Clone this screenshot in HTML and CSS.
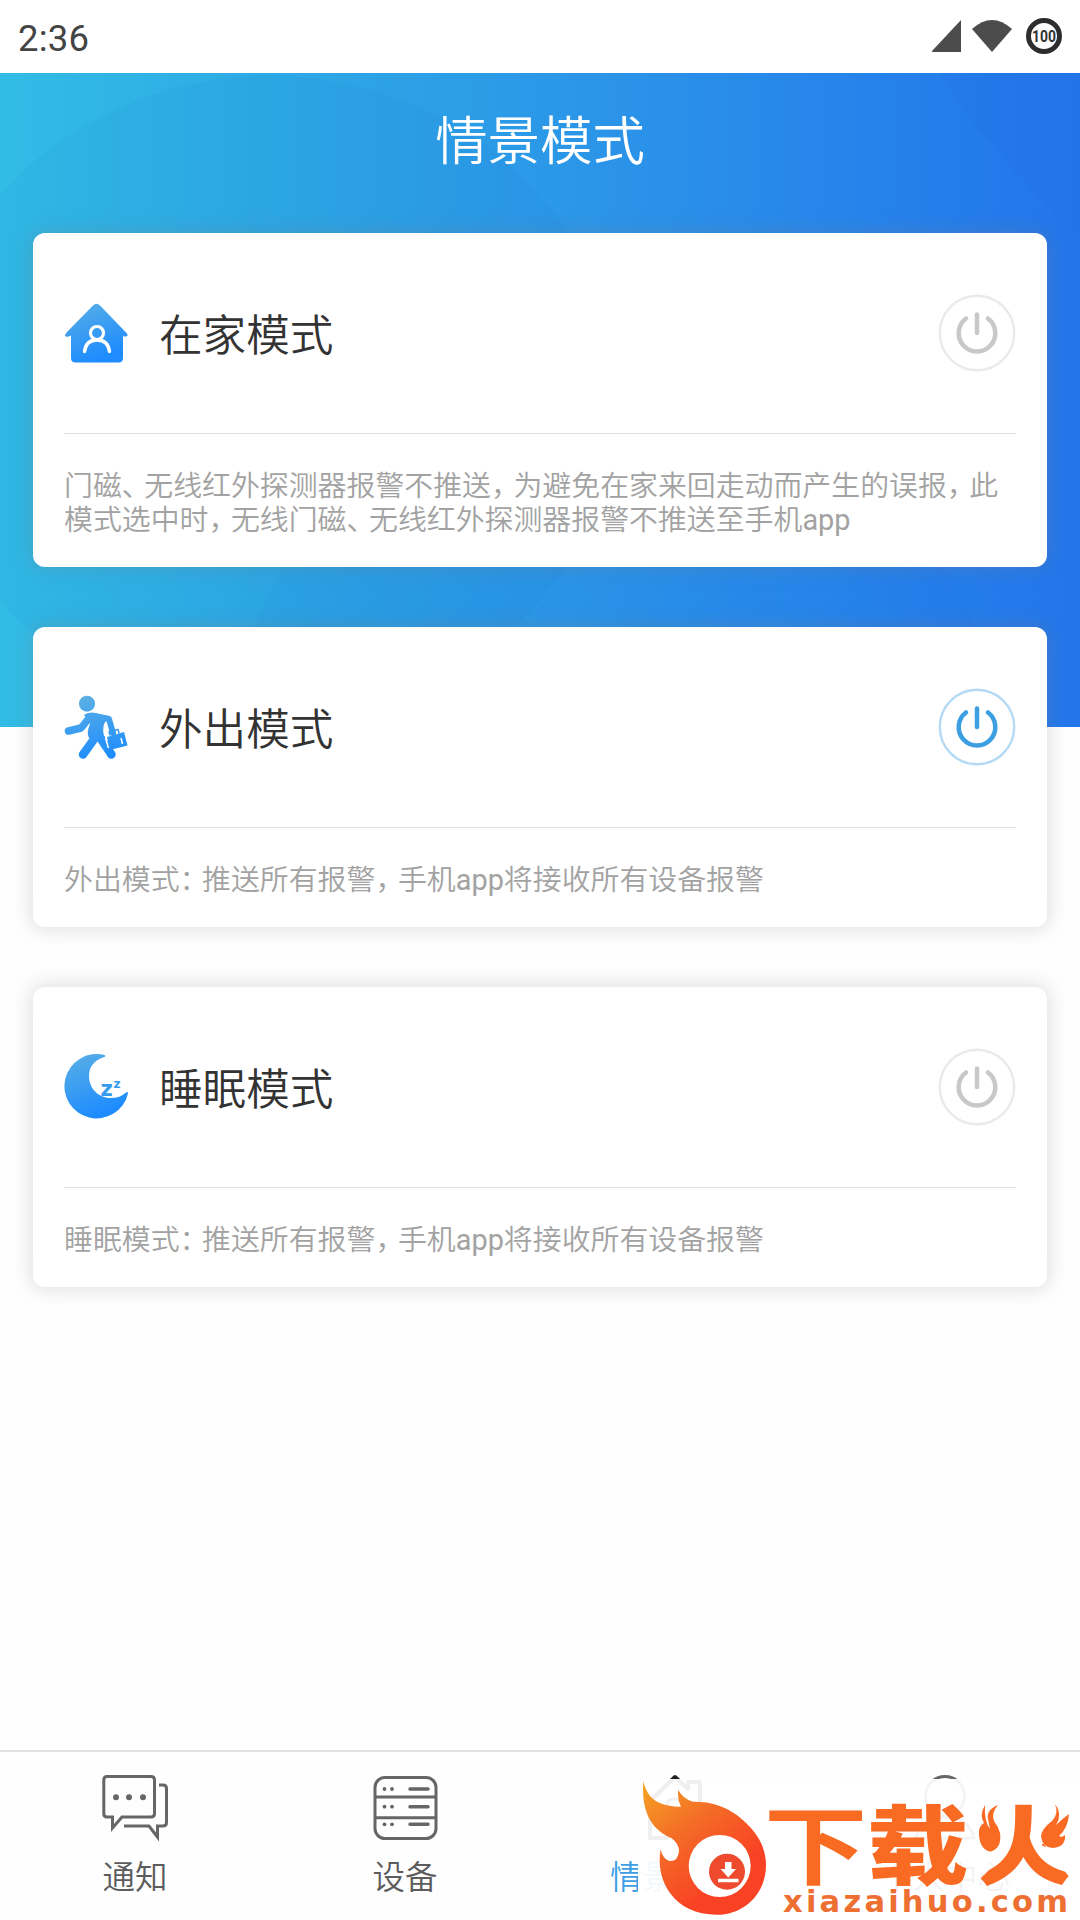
FILE: index.html
```html
<!DOCTYPE html>
<html lang="zh-CN">
<head>
  <meta charset="UTF-8">
  <meta name="viewport" content="width=device-width, initial-scale=1.0">
  <title>情景模式</title>
  <link rel="stylesheet" href="styles.css">
</head>
<body>
  <svg width="0" height="0" class="defs">
    <defs>
      <linearGradient id="blue" x1="0" y1="0" x2="0.4" y2="1">
        <stop offset="0" stop-color="#5bb0e4"/>
        <stop offset="1" stop-color="#1e8cff"/>
      </linearGradient>
      <linearGradient id="manBlue" gradientUnits="userSpaceOnUse" x1="25" y1="0" x2="38" y2="64">
        <stop offset="0" stop-color="#5bb0e4"/>
        <stop offset="1" stop-color="#1e8cff"/>
      </linearGradient>
      <linearGradient id="fire" x1="0" y1="0" x2="0.6" y2="0.8">
        <stop offset="0" stop-color="#f6a21b"/>
        <stop offset="0.5" stop-color="#f4661f"/>
        <stop offset="1" stop-color="#f93a1c"/>
      </linearGradient>
      <clipPath id="trunk">
        <path d="M370 20H402V60L442 112H330L370 72Z"/>
      </clipPath>
      <symbol id="power" viewBox="0 0 78 78">
        <circle class="ring" cx="39" cy="39" r="37.2"/>
        <path class="mark" d="M28 24.5A18.3 18.3 0 1 0 50 24.5M39 20.5V39"/>
      </symbol>
    </defs>
  </svg>

  <div class="status">
    <span class="time">2:36</span>
    <svg width="131" height="40" viewBox="0 0 131 40">
      <path d="M1 35V34L30 3V35Z" fill="#4c4c4c"/>
      <path d="M41 12Q61-6 81 12L61 35Z" fill="#4c4c4c"/>
      <circle cx="113" cy="19" r="15.500" fill="#fff" stroke="#2d2d2d" stroke-width="5"/>
      <text x="113" y="24.500" class="battery" textLength="24" lengthAdjust="spacingAndGlyphs">100</text>
    </svg>
  </div>

  <header class="header">
    <svg class="header-bg" width="1080" height="654" viewBox="0 73 1080 654">
      <ellipse cx="270" cy="398" rx="347" ry="322" fill="#0a62c8" opacity="0.06"/>
      <ellipse cx="615" cy="730" rx="378" ry="340" fill="#1560d8" opacity="0.05"/>
      <path d="M940 73Q985 150 1080 235V73Z" fill="#1048c8" opacity="0.05"/>
    </svg>
    <h1>情景模式</h1>
  </header>

  <main>
    <section class="card">
      <div class="card-head">
        <svg width="64" height="64" viewBox="0 0 64 64">
          <path d="M29 4.500Q32.500 1 36 4.500L63 32.500Q65 36 60 35.500L59 34.500V57Q59 61.500 54.500 61.500H11.500Q7 61.500 7 57V34.500Q2 37 1 34.500Q1 33 3 31Z" fill="url(#blue)"/>
          <circle cx="33" cy="32" r="6.500" fill="none" stroke="#fff" stroke-width="3.200"/>
          <path d="M20.500 50.500Q22 39 33 39Q44 39 45.500 50.500" fill="none" stroke="#fff" stroke-width="3.400" stroke-linecap="round"/>
        </svg>
        <h2>在家模式</h2>
        <svg class="power" width="78" height="78"><use href="#power"/></svg>
      </div>
      <p>门磁<i>、</i>无线红外探测器报警不推送<i>，</i>为避免在家来回走动而产生的误报<i>，</i>此<br>模式选中时<i>，</i>无线门磁<i>、</i>无线红外探测器报警不推送至手机<b>app</b></p>
    </section>

    <section class="card">
      <div class="card-head">
        <svg width="64" height="64" viewBox="0 0 64 64">
          <g fill="none" stroke="url(#manBlue)" stroke-linecap="round" stroke-linejoin="round">
            <path d="M4.500 36L17 33L26 22" stroke-width="7.500"/>
            <path d="M27 21L45 24L49 38" stroke-width="6"/>
            <path d="M33 40L19 59.500" stroke-width="8.500"/>
            <path d="M35 41L47.500 59.500" stroke-width="8.500"/>
            <path d="M46 40L45 37L54 34.500L55 38" stroke-width="1.500"/>
          </g>
          <g fill="url(#manBlue)">
            <circle cx="23" cy="8.700" r="8"/>
            <path d="M20 20Q25 16.500 32 18L45 21L40 29Q38 37 41 43H25Q22 38 26 29Z"/>
            <path d="M43 42L60 37L63.500 50.500L46 55Z"/>
          </g>
          <path d="M57 43L58.500 49M41.500 43L44.500 53" stroke="#fff" stroke-width="1.500"/>
        </svg>
        <h2>外出模式</h2>
        <svg class="power on" width="78" height="78"><use href="#power"/></svg>
      </div>
      <p>外出模式<i>：</i>推送所有报警<i>，</i>手机<b>app</b>将接收所有设备报警</p>
    </section>

    <section class="card">
      <div class="card-head">
        <svg width="64" height="66" viewBox="0 0 64 66">
          <path d="M40.500 1A32.200 32.200 0 1 0 64 39.500Q64 37 62 38.500Q56 44 47 44C34 44 25 34 25 22C25 13 30 6 40.500 3Q42 2 40.500 1Z" fill="url(#blue)"/>
          <text x="36.500" y="42" class="zz" font-size="21">z</text>
          <text x="49.500" y="33.500" class="zz" font-size="12">z</text>
        </svg>
        <h2>睡眠模式</h2>
        <svg class="power" width="78" height="78"><use href="#power"/></svg>
      </div>
      <p>睡眠模式<i>：</i>推送所有报警<i>，</i>手机<b>app</b>将接收所有设备报警</p>
    </section>
  </main>

  <nav class="tabs">
    <a>
      <svg width="72" height="72" viewBox="0 0 72 72">
        <path d="M8 4.500H52Q55.500 4.500 55.500 8V41.500Q55.500 45 52 45H23L13.500 56V45H8Q4.800 45 4.800 41.500V8Q4.800 4.500 8 4.500Z"/>
        <path d="M60 13H64Q67.500 13 67.500 16.500V50.500Q67.500 54 64 54H58.500V65L50 54H25"/>
        <g class="dot"><circle cx="17" cy="25.300" r="3"/><circle cx="30" cy="25.300" r="3"/><circle cx="44" cy="25.300" r="3"/></g>
      </svg>
      <span>通知</span>
    </a>
    <a>
      <svg width="72" height="72" viewBox="0 0 72 72">
        <rect x="6" y="5.500" width="61" height="61" rx="10"/>
        <path d="M6 25H67M6 45.700H67" />
        <path d="M41 17H59M41 34.700H59M41 52.300H59" stroke-linecap="round" stroke-width="3.500"/>
        <g class="dot"><circle cx="15.500" cy="17" r="1.900"/><circle cx="23" cy="17" r="1.900"/><circle cx="15.500" cy="34.700" r="1.900"/><circle cx="23" cy="34.700" r="1.900"/><circle cx="15.500" cy="52.300" r="1.900"/><circle cx="23" cy="52.300" r="1.900"/></g>
      </svg>
      <span>设备</span>
    </a>
    <a class="active">
      <svg width="72" height="72" viewBox="0 0 72 72">
        <path d="M36 5L11 29V66H28V52H44V66H61V10H49V17Z" fill="none" stroke="#222" stroke-width="4" stroke-linejoin="round"/>
        <path d="M28 43V33Q28 27 36 27Q44 27 44 33V43Z" stroke="#222"/>
      </svg>
      <span>情景模式</span>
    </a>
    <a>
      <svg width="72" height="72" viewBox="0 0 72 72">
        <circle cx="36" cy="24" r="19.500"/>
        <path d="M7 66Q12 46 36 45Q60 46 65 66Z"/>
      </svg>
      <span>个人中心</span>
    </a>
  </nav>

  <!-- site badge -->
  <div class="badge">
    <svg width="442" height="141" viewBox="0 0 442 141">
      <path d="M5.300 2C8 14 14 21 22 24Q32 28 43 27.700Q39 20 40.300 11Q45 20 55 22.700C80 22 99 33 113 49C123 60 128 73 128 86C128 115 106 135.700 78.700 135.700C58 135.700 42 128 32 114C23 101 20 87 22.500 70.300Q25 80 31 82Q40 83 41 72Q41 65 33.700 59.300C14 51 3 34 5.300 2Z" fill="url(#fire)"/>
      <circle cx="81.700" cy="87" r="31" fill="#fff"/>
      <circle cx="89" cy="92.700" r="18" fill="#ee4326"/>
      <path d="M87 83H93.500V90H98L90.300 98.500L82.500 90H87Z" fill="#fff"/>
      <path d="M80 101.500H100.500" stroke="#fff" stroke-width="3.500"/>
      <g class="brand">
        <text transform="translate(126 99) scale(1.2 1)" font-weight="700">下</text>
        <text transform="translate(229 99) scale(1.18 1)" font-weight="900">载</text>
        <g clip-path="url(#trunk)"><text transform="translate(336 99) scale(1.16 1)" font-weight="900">火</text></g>
      </g>
      <g fill="#f9651b">
        <path d="M347 26Q341 36 346 44Q340 47 341 57Q343 72 353 72.500Q364 69 362 54Q360 47 356 42Q353 34 360 26Q348 31 350 40L352 50Q346 42 347 26Z"/>
        <path d="M417 25Q421 35 414 42Q403 50 403 58Q405 69 415 69Q428 68 427 56Q424 59 421 57Q430 49 431 35Q424 40 418 46Q425 35 417 25Z"/>
      </g>
      <text x="145" y="133" class="domain" textLength="285">xiazaihuo.com</text>
    </svg>
  </div>
</body>
</html>
```
FILE: styles.css
```css
* { box-sizing: border-box; }
body { margin: 0; height: 1920px; display: flex; flex-direction: column; position: relative; overflow: hidden; background: #fefefe; font-family: Roboto, "Noto Sans CJK SC", sans-serif; }
h1, h2, p { margin: 0; font-weight: 400; }
.defs { position: absolute; }

.status { height: 73px; flex: none; display: flex; align-items: center; justify-content: space-between; padding: 0 18px 0 18px; background: #fff; }
.time { font-size: 36.5px; color: #444; letter-spacing: 0.2px; padding-top: 3px; }
.battery { font: bold 17px Roboto, sans-serif; fill: #333; text-anchor: middle; }

.header { height: 654px; flex: none; position: relative; background: linear-gradient(90deg, #31bce5 0%, #2da6e5 30%, #2b95e8 55%, #2683eb 80%, #2375ea 100%); }
.header-bg { position: absolute; left: 0; top: 0; }
.header h1 { position: relative; padding-top: 29px; line-height: 80px; text-align: center; font-size: 52.4px; font-weight: 350; color: #fff; }

/* cards overlap the blue header */
main { position: relative; flex: 1; margin-top: -494px; padding: 0 33px; display: flex; flex-direction: column; gap: 60px; }
.card { background: #fff; border-radius: 12px; padding: 0 31px 30px; box-shadow: 0 0 18px 3px rgba(130, 125, 120, 0.22); }
.card-head { height: 201px; display: flex; align-items: center; border-bottom: 1px solid #dedede; }
.card-head h2 { flex: 1; margin-left: 31px; padding-top: 8px; font-size: 43.6px; font-weight: 350; color: #333; line-height: 60px; }
.card p { padding-top: 35px; font-size: 28.9px; font-weight: 350; line-height: 34px; color: #a2a2a2; white-space: nowrap; }
.card p i { font-style: normal; letter-spacing: -6.4px; }
.card p b { font-weight: 400; }
.power { fill: none; stroke: #c8c8c8; }
.power.on { stroke: #3c9fe2; }
.ring { stroke-width: 2.4; opacity: 0.38; }
.mark { stroke-width: 4.5; stroke-linecap: round; }
.zz { font-family: "DejaVu Sans", sans-serif; font-weight: bold; fill: #349bf0; }

.tabs { height: 170px; flex: none; display: flex; border-top: 2px solid #e3e3e3; background: #fefefe; }
.tabs a { flex: 1; display: flex; flex-direction: column; align-items: center; padding-top: 20px; font-size: 32.5px; font-weight: 350; color: #5c5c5c; }
.tabs svg { fill: none; stroke: #666; stroke-width: 3; }
.tabs .dot { fill: #666; stroke: none; }
.tabs span { line-height: 48px; margin-top: 10px; }
.tabs .active { color: #3c9fe6; }

.badge { position: absolute; right: 0; bottom: 0; width: 442px; height: 141px; background: rgba(255, 255, 255, 0.93); }
.badge svg { display: block; opacity: 0.96; }
.brand { font-family: "Noto Sans CJK SC", sans-serif; font-size: 86px; fill: #f9651b; }
.domain { font-family: "DejaVu Sans", sans-serif; font-weight: bold; font-size: 30.5px; fill: #ee6a2a; }
```
